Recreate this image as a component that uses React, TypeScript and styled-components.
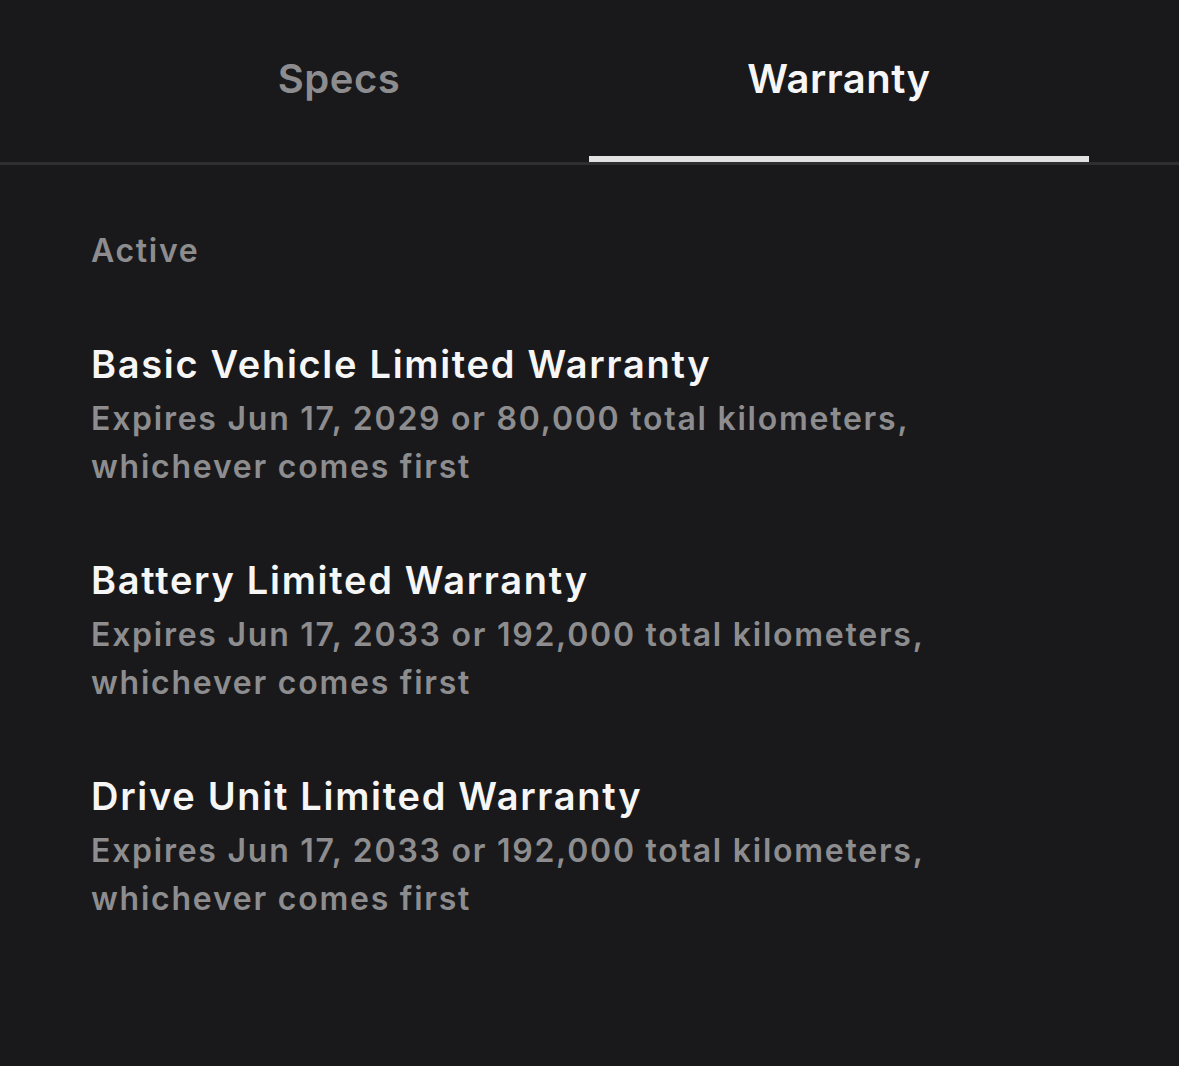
import React, { useState } from 'react'
import styled, { createGlobalStyle } from 'styled-components'

const GlobalStyle = createGlobalStyle`
  html, body {
    margin: 0;
    padding: 0;
    background: #19191b;
  }
  body {
    font-family: Inter, "Noto Sans", sans-serif;
    -webkit-font-smoothing: antialiased;
  }
`

type Warranty = {
  title: string
  expires: string
}

const warranties: Warranty[] = [
  {
    title: 'Basic Vehicle Limited Warranty',
    expires: 'Expires Jun 17, 2029 or 80,000 total kilometers,',
  },
  {
    title: 'Battery Limited Warranty',
    expires: 'Expires Jun 17, 2033 or 192,000 total kilometers,',
  },
  {
    title: 'Drive Unit Limited Warranty',
    expires: 'Expires Jun 17, 2033 or 192,000 total kilometers,',
  },
]

const Page = styled.div`
  width: 1179px;
  min-height: 1066px;
  background: #19191b;
  color: #f4f4f4;
`

const TabBar = styled.div`
  display: flex;
  padding: 0 90px 0 89px;
  border-bottom: 3px solid #2e2e30;
`

const Tab = styled.button<{ $active: boolean }>`
  flex: 1;
  height: 162px;
  display: flex;
  align-items: center;
  justify-content: center;
  padding: 0;
  margin: 0;
  border: 0;
  border-bottom: 6px solid ${({ $active }) => ($active ? '#e2e2e2' : 'transparent')};
  box-sizing: border-box;
  background: transparent;
  font-family: inherit;
  font-size: 40px;
  font-weight: 600;
  letter-spacing: 0.5px;
  color: ${({ $active }) => ($active ? '#f6f6f6' : '#8d8d8f')};
  cursor: pointer;
`

const Content = styled.div`
  padding: 62px 91px 0;
`

const SectionLabel = styled.div`
  font-size: 32px;
  font-weight: 600;
  letter-spacing: 1.7px;
  color: #8d8d8f;
  line-height: 48px;
  margin-bottom: 65px;
`

const List = styled.div`
  display: flex;
  flex-direction: column;
  gap: 65px;
`

const Item = styled.div`
  display: flex;
  flex-direction: column;
`

const ItemTitle = styled.div`
  font-size: 38px;
  font-weight: 600;
  letter-spacing: 1.7px;
  color: #f6f6f6;
  line-height: 48px;
  margin-bottom: 7px;
`

const ItemText = styled.div`
  font-size: 32px;
  font-weight: 600;
  letter-spacing: 1.75px;
  color: #8d8d8f;
  line-height: 48px;
`

export default function App() {
  const [tab, setTab] = useState<'specs' | 'warranty'>('warranty')

  return (
    <Page>
      <GlobalStyle />
      <TabBar>
        <Tab $active={tab === 'specs'} onClick={() => setTab('specs')}>
          Specs
        </Tab>
        <Tab $active={tab === 'warranty'} onClick={() => setTab('warranty')}>
          Warranty
        </Tab>
      </TabBar>
      <Content>
        <SectionLabel>Active</SectionLabel>
        <List>
          {warranties.map((w) => (
            <Item key={w.title}>
              <ItemTitle>{w.title}</ItemTitle>
              <ItemText>
                {w.expires}
                <br />
                whichever comes first
              </ItemText>
            </Item>
          ))}
        </List>
      </Content>
    </Page>
  )
}
